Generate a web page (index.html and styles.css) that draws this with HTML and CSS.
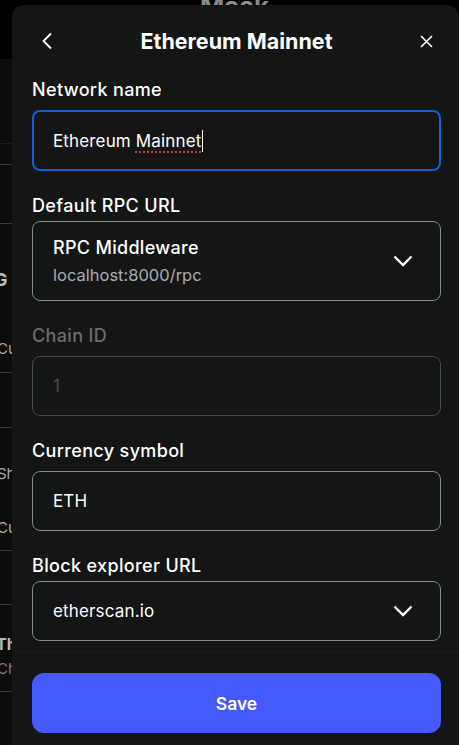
FILE: index.html
```html
<!DOCTYPE html>
<html lang="en">
<head>
  <meta charset="UTF-8">
  <title>Ethereum Mainnet</title>
  <link rel="stylesheet" href="styles.css">
</head>
<body>
  <div class="page">
    <div class="page-top"><span class="brand">Mask</span></div>
    <div class="page-list">
      <div class="row row-faint r1"></div>
      <div class="row r2"></div>
      <div class="row r3">
        <span class="heading">G</span>
        <span class="item item-low">Cu</span>
      </div>
      <div class="row r4"></div>
      <div class="row r5">
        <span class="item">Sh</span>
        <span class="item item-gap">Cu</span>
      </div>
      <div class="row r6"></div>
      <div class="row r7">
        <span class="heading heading-sm">Th</span>
        <span class="sub">Ch</span>
      </div>
      <div class="row"></div>
    </div>
  </div>

  <div class="modal">
    <div class="modal-header">
      <svg class="icon-back" width="12" height="18" viewBox="0 0 12 18"><path d="M10 1.5 L2.5 9 L10 16.5" fill="none" stroke="#fff" stroke-width="1.8"/></svg>
      <h1>Ethereum Mainnet</h1>
      <svg class="icon-close" width="13" height="13" viewBox="0 0 13 13"><path d="M1 1 L12 12 M12 1 L1 12" fill="none" stroke="#fff" stroke-width="1.6"/></svg>
    </div>

    <div class="modal-body">
      <div class="field">
        <label>Network name</label>
        <div class="box box-focus">
          <span class="value">Ethereum <span class="misspelt">Mainnet</span><span class="caret"></span></span>
        </div>
      </div>

      <div class="field field-tight">
        <label>Default RPC URL</label>
        <div class="box box-select box-tall">
          <div>
            <div class="value value-strong">RPC Middleware</div>
            <div class="value-sub">localhost:8000/rpc</div>
          </div>
          <svg class="chevron" width="20" height="12" viewBox="0 0 20 12"><path d="M1.5 1.5 L10 10 L18.5 1.5" fill="none" stroke="#fff" stroke-width="2.4"/></svg>
        </div>
      </div>

      <div class="field field-disabled">
        <label>Chain ID</label>
        <div class="box">
          <span class="value">1</span>
        </div>
      </div>

      <div class="field">
        <label>Currency symbol</label>
        <div class="box">
          <span class="value">ETH</span>
        </div>
      </div>

      <div class="field field-tight">
        <label>Block explorer URL</label>
        <div class="box box-select">
          <span class="value">etherscan.io</span>
          <svg class="chevron" width="20" height="12" viewBox="0 0 20 12"><path d="M1.5 1.5 L10 10 L18.5 1.5" fill="none" stroke="#fff" stroke-width="2.4"/></svg>
        </div>
      </div>
    </div>

    <div class="modal-footer">
      <button class="btn-save">Save</button>
    </div>
  </div>
</body>
</html>
```

FILE: styles.css
```css
body { margin: 0; background: #0b0c0c; font-family: "Inter", "Noto Sans", sans-serif; color: #fff; overflow: hidden; height: 745px; }

/* page behind the dialog */
.page { height: 745px; }
.page-top { height: 59px; background: #000; text-align: center; overflow: hidden; }
.brand { display: inline-block; margin-top: -12px; font-size: 26px; font-weight: 700; color: #8a8b8c; padding-left: 10px; }
.page-list { padding-top: 84px; }
.row { box-sizing: border-box; border-top: 1px solid #3a3c3e; display: flex; flex-direction: column; }
.row-faint { border-top-color: #1b1c1d; }
.r1 { height: 21px; }
.r2 { height: 59px; }
.r3 { height: 149px; padding-top: 45px; }
.r4 { height: 55px; }
.r5 { height: 123px; padding-top: 36px; }
.r6 { height: 54px; }
.r7 { height: 87px; padding-top: 28px; }
.heading { font-size: 18px; font-weight: 700; color: #b9babb; margin-left: -6px; line-height: 22px; }
.heading-sm { font-size: 16px; margin-left: -4px; }
.item { font-size: 15px; color: #a8a9aa; margin-left: -3px; line-height: 20px; }
.item-low { margin-top: 48px; }
.item-gap { margin-top: 34px; }
.sub { font-size: 15px; color: #7c7d7e; margin-left: -3px; line-height: 20px; margin-top: 4px; }

/* dialog */
.modal { position: absolute; left: 12px; top: 5px; right: 0; bottom: 0; background: #141515; border-radius: 12px 12px 0 0; display: flex; flex-direction: column; }

.modal-header { height: 72px; display: flex; align-items: center; justify-content: space-between; padding: 0 26px 0 29px; }
.modal-header h1 { margin: 0; font-size: 21.5px; font-weight: 700; }
.icon-back { display: block; }
.icon-close { display: block; }

.modal-body { flex: 1; padding: 1px 18px 0 20px; display: flex; flex-direction: column; gap: 23px; }
.field label { display: block; font-size: 18px; font-weight: 500; line-height: 24px; letter-spacing: 0.35px; margin-bottom: 8px; }
.field-tight label { margin-bottom: 3px; }
.box { height: 60px; box-sizing: border-box; border: 1px solid #858b95; border-radius: 8px; padding: 0 20px; display: flex; align-items: center; }
.box-tall { height: 80px; }
.box-select { justify-content: space-between; padding-right: 27px; }
.box-focus { border: 2px solid #0d62d8; padding-left: 19px; height: 61px; }
.value { font-size: 17px; letter-spacing: 0.15px; }
.value-strong { font-size: 18px; font-weight: 500; letter-spacing: 0.3px; margin-bottom: 7px; }
.value-sub { font-size: 16.5px; color: #a9adb4; }
.misspelt { text-decoration: underline dotted #d23b3b; text-decoration-thickness: 2px; text-underline-offset: 5px; }
.caret { display: inline-block; width: 1px; height: 22px; background: #fff; vertical-align: -5px; }

.field-disabled label { color: #6a6c70; }
.field-disabled .box { border-color: #45484c; }
.field-disabled .value { color: #4a4d50; }

.modal-footer { padding: 21px 18px 12px 20px; box-shadow: 0 -1px 0 #1b1c1c; }
.btn-save { width: 100%; height: 60px; border: none; border-radius: 12px; background: #4459ff; color: #fff; font-family: inherit; font-size: 17.5px; font-weight: 600; }
```
